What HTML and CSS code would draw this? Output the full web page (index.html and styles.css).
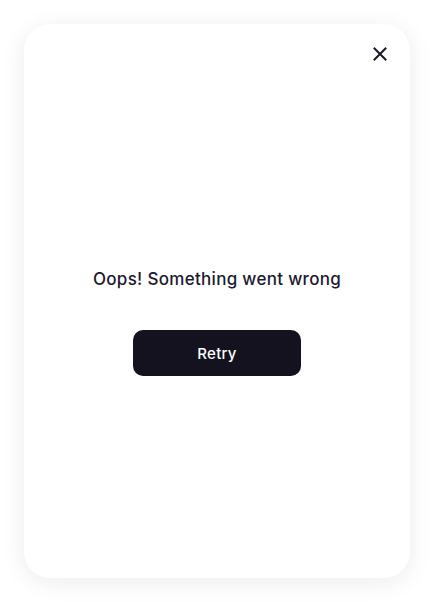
FILE: index.html
```html
<!DOCTYPE html>
<html lang="en">
<head>
<meta charset="utf-8">
<title>Error</title>
<link rel="stylesheet" href="styles.css">
</head>
<body>
  <div class="modal">
    <div class="modal-head">
      <button class="close" aria-label="Close">
        <svg width="14" height="14" viewBox="0 0 14 14" fill="none">
          <path d="M1.5 1.5L12.5 12.5M12.5 1.5L1.5 12.5" stroke="#1b1726" stroke-width="2" stroke-linecap="square"/>
        </svg>
      </button>
    </div>
    <div class="modal-body">
      <p class="message">Oops! Something went wrong</p>
      <button class="retry">Retry</button>
    </div>
  </div>
</body>
</html>
```
FILE: styles.css
```css
* { box-sizing: border-box; }
html, body { margin: 0; height: 100%; background: #ffffff; }
body {
  padding: 24px;
  font-family: Inter, "Noto Sans", sans-serif;
}
.modal {
  width: 386px;
  height: 554px;
  background: #fff;
  border-radius: 26px;
  box-shadow: 0 4px 24px rgba(20, 16, 40, 0.08);
  display: flex;
  flex-direction: column;
}
.modal-head {
  display: flex;
  justify-content: flex-end;
  padding: 20px 20px 0 0;
}
.close {
  width: 20px;
  height: 20px;
  padding: 0;
  border: 0;
  background: none;
  display: flex;
  align-items: center;
  justify-content: center;
}
.modal-body {
  flex: 1;
  display: flex;
  flex-direction: column;
  align-items: center;
  padding-top: 204px;
}
.message {
  margin: 0;
  font-size: 17px;
  font-weight: 500;
  color: #1c1a2e;
  letter-spacing: 0.3px;
  line-height: 22px;
}
.retry {
  margin-top: 40px;
  width: 168px;
  height: 46px;
  border: 0;
  border-radius: 10px;
  background: #15121f;
  color: #fff;
  font-family: Inter, "Noto Sans", sans-serif;
  font-size: 15px;
  font-weight: 500;
  letter-spacing: 0.3px;
}
```
